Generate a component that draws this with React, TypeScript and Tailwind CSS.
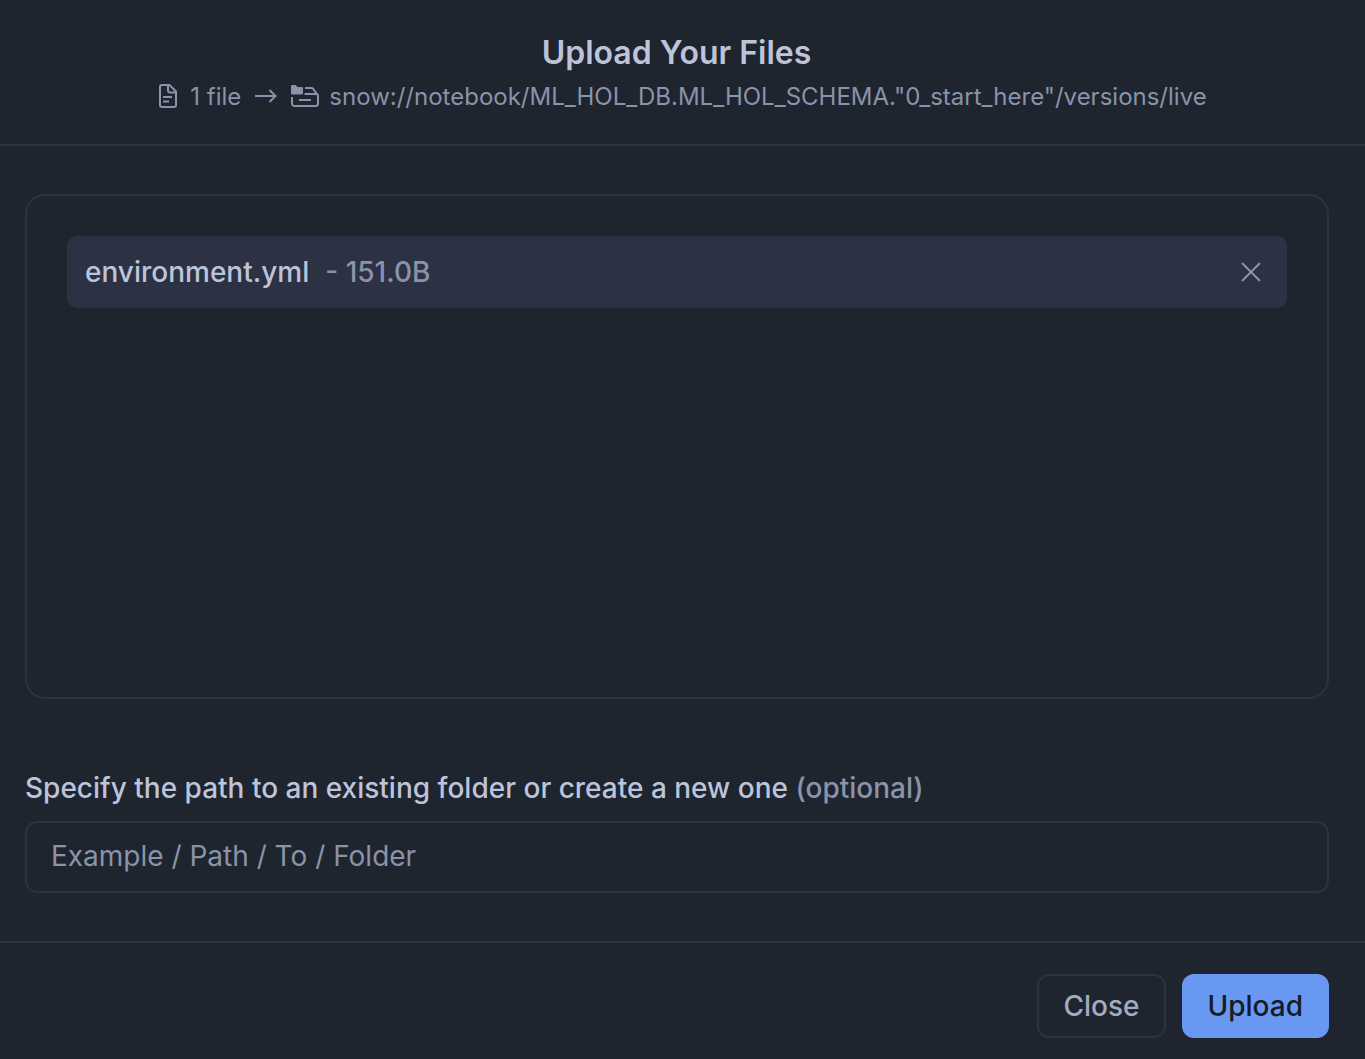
export default function App() {
  return (
    <main className="flex min-h-screen flex-col bg-[#1e252f] font-['Inter',sans-serif] text-[#bdc4d9]">
      <header className="flex flex-col items-center border-b-2 border-[#2c3244] pt-[33px] pr-3 pb-8">
        <h1 className="text-[32px] leading-10 font-semibold">Upload Your Files</h1>
        <div className="mt-2 flex h-[31px] items-center pl-3 text-2xl text-[#8a93a9]">
          <svg width="20" height="28" viewBox="0 0 20 28" fill="none" stroke="currentColor" strokeWidth="2">
            <path d="M4 2h7.500l6.500 6.500V22a2 2 0 0 1-2 2H4a2 2 0 0 1-2-2V4a2 2 0 0 1 2-2z" />
            <path d="M10 2v5.500a2 2 0 0 0 2 2h6M5 14h9M5 18.500h6" />
          </svg>
          <span className="ml-3">1 file</span>
          <svg className="mx-3" width="26" height="26" viewBox="0 0 26 26" fill="none" stroke="currentColor" strokeWidth="2">
            <path d="M2 12h20.500M16.500 6l6 6-6 6" />
          </svg>
          <svg width="28" height="28" viewBox="0 0 28 28" fill="none" stroke="currentColor" strokeWidth="2">
            <path d="M0 3a1 1 0 0 1 1-1h3.500l2 2H11a1 1 0 0 1 1 1v5a1.500 1.500 0 0 1-1.500 1.500h-9A1.500 1.500 0 0 1 0 10z" fill="currentColor" stroke="none" />
            <path d="M1 14v6.500a2.500 2.500 0 0 0 2.500 2.500h21a2.500 2.500 0 0 0 2.500-2.500V13a2 2 0 0 0-2-2H13.500M14 5h6.500a2 2 0 0 1 1.500.700L27 12.500M8 17h12" />
          </svg>
          <span className="ml-2.5">snow://notebook/ML_HOL_DB.ML_HOL_SCHEMA."0_start_here"/versions/live</span>
        </div>
      </header>
      <section className="flex flex-1 flex-col pt-12 pr-9 pb-12 pl-[25px]">
        <div className="min-h-[505px] rounded-[20px] border-2 border-[#2c3244] p-10">
          <div className="flex h-18 items-center rounded-[10px] bg-[#2c3144] px-[18px] text-[28px]">
            <span className="font-medium">environment.yml</span>
            <span className="ml-4 font-medium text-[#8a93a9]">- 151.0B</span>
            <button aria-label="Remove environment.yml" className="ml-auto p-2">
              <svg width="20" height="20" viewBox="0 0 20 20" stroke="#8a93a9" strokeWidth="2"><path d="M1 1l18 18M19 1L1 19" /></svg>
            </button>
          </div>
        </div>
        <label htmlFor="path" className="mt-[69px] text-[28px] leading-10 font-medium">Specify the path to an existing folder or create a new one <span className="text-[#8a93a9]">(optional)</span></label>
        <input id="path" placeholder="Example / Path / To / Folder" className="mt-[13px] h-18 w-full rounded-xl border-2 border-[#2c3244] bg-transparent px-6 pb-0.5 text-[28px] placeholder:text-[#8a93a9]" />
      </section>
      <footer className="flex justify-end gap-4 border-t-2 border-[#2c3244] pt-[31px] pr-9 pb-[21px] text-[28px] font-medium">
        <button className="h-16 rounded-xl border-2 border-[#2c3244] px-6 text-[#a3abc0]">Close</button>
        <button className="h-16 rounded-xl bg-[#6998f2] px-[26px] text-[#151c27]">Upload</button>
      </footer>
    </main>
  );
}
